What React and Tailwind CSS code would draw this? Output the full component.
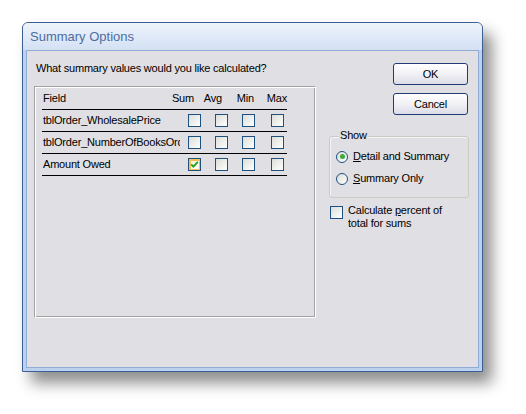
import React from "react";

const font = { fontFamily: '"Liberation Sans", Arial, sans-serif' };

function Box({ checked }) {
  if (checked) {
    return (
      <span className="w-[13px] h-[13px] shrink-0 border border-[#1c5180] bg-[#f5c152] flex items-center justify-center">
        <span className="w-[8px] h-[8px] bg-[linear-gradient(135deg,#f6efd8,#ffffff)] flex items-center justify-center">
          <svg width="9" height="9" viewBox="0 0 9 9" className="shrink-0">
            <path d="M1.2 4.3 L3.4 6.6 L7.8 1.8" fill="none" stroke="#21a121" strokeWidth="1.8" />
          </svg>
        </span>
      </span>
    );
  }
  return (
    <span className="block w-[13px] h-[13px] shrink-0 border border-[#1c5180] bg-[linear-gradient(135deg,#dcdcd7,#ffffff)]" />
  );
}

function Radio({ on }) {
  return (
    <span className="w-[12px] h-[12px] shrink-0 rounded-full border border-[#1c5180] bg-[linear-gradient(135deg,#dcdcd7,#ffffff)] flex items-center justify-center">
      {on && <span className="block w-[5px] h-[5px] rounded-full bg-[#3dab3d]" />}
    </span>
  );
}

function Row({ name, checked }) {
  return (
    <div className="flex items-center h-[22px] border-b border-black">
      <div className="w-[138px] pl-[1px] overflow-hidden whitespace-nowrap leading-[13px]">{name}</div>
      <div className="ml-[8px]"><Box checked={checked} /></div>
      <div className="ml-[14px]"><Box /></div>
      <div className="ml-[14px]"><Box /></div>
      <div className="ml-[16px]"><Box /></div>
    </div>
  );
}

function Button({ children, className = "" }) {
  return (
    <div
      className={
        "w-[75px] h-[22px] rounded-[3px] border border-[#1f3d74] bg-[linear-gradient(180deg,#ffffff_0%,#f1f1f5_50%,#dcdce8_100%)] flex items-center justify-center leading-[13px] " +
        className
      }
    >
      {children}
    </div>
  );
}

export default function App() {
  return (
    <div className="w-[526px] h-[414px] bg-white pt-[22px] pl-[22px] text-[11px] tracking-[-0.2px] text-black" style={font}>
      <div className="w-[461px] h-[350px] flex flex-col border border-[#3b5e93] rounded-t-[6px] overflow-hidden shadow-[9px_11px_15px_rgba(0,0,0,0.45)] bg-[#bcd1ef]">
        <div className="h-[27px] shrink-0 bg-[linear-gradient(180deg,#eef4fc_0%,#dfe9f8_55%,#d3e1f4_100%)] flex items-center pl-[7px] text-[13px] tracking-normal text-[#4d6d9f] leading-[15px]">
          Summary Options
        </div>
        <div className="flex-1 flex flex-col px-[3px] pb-[3px]">
          <div className="flex-1 flex border border-[#8fabd6] bg-[#e0dfe3] pt-[11px] pl-[7px]">
            <div className="flex flex-col w-[282px]">
              <div className="pl-[2px] leading-[13px] h-[13px] whitespace-nowrap">
                What summary values would you like calculated?
              </div>
              <div className="mt-[11px] w-[282px] h-[232px] border border-t-[#a3a3a3] border-l-[#a3a3a3] border-r-white border-b-white shadow-[inset_1px_1px_0_#ffffff,inset_-1px_-1px_0_#a3a3a3] pt-[1px] pl-[7px]">
                <div className="w-[245px] flex flex-col">
                  <div className="flex items-center h-[22px] border-b border-black leading-[13px]">
                    <span className="w-[130px] pl-[1px]">Field</span>
                    <span className="w-[32px]">Sum</span>
                    <span className="w-[33px]">Avg</span>
                    <span className="w-[30px]">Min</span>
                    <span>Max</span>
                  </div>
                  <Row name="tblOrder_WholesalePrice" />
                  <Row name="tblOrder_NumberOfBooksOrdered" />
                  <Row name="Amount Owed" checked />
                </div>
              </div>
            </div>
            <div className="ml-[13px] w-[140px] flex flex-col mt-[1px]">
              <Button className="ml-[64px]">OK</Button>
              <Button className="ml-[64px] mt-[8px]">Cancel</Button>
              <div className="relative mt-[21px] h-[62px] w-[140px] rounded-[3px] border border-[#cbcbc4] shadow-[inset_1px_1px_0_#f4f4f6] pt-[13px] pl-[6px]">
                <span className="absolute left-[9px] top-[-8px] px-[1px] bg-[#e0dfe3] leading-[13px]">Show</span>
                <div className="flex items-center h-[13px]">
                  <Radio on />
                  <span className="ml-[5px] leading-[13px]"><u>D</u>etail and Summary</span>
                </div>
                <div className="flex items-center h-[13px] mt-[9px]">
                  <Radio />
                  <span className="ml-[5px] leading-[13px]"><u>S</u>ummary Only</span>
                </div>
              </div>
              <div className="flex items-start mt-[8px] ml-[1px]">
                <Box />
                <span className="ml-[5px] -mt-[2px] leading-[13px]">
                  Calculate <u>p</u>ercent of
                  <br />
                  total for sums
                </span>
              </div>
            </div>
          </div>
        </div>
      </div>
    </div>
  );
}
